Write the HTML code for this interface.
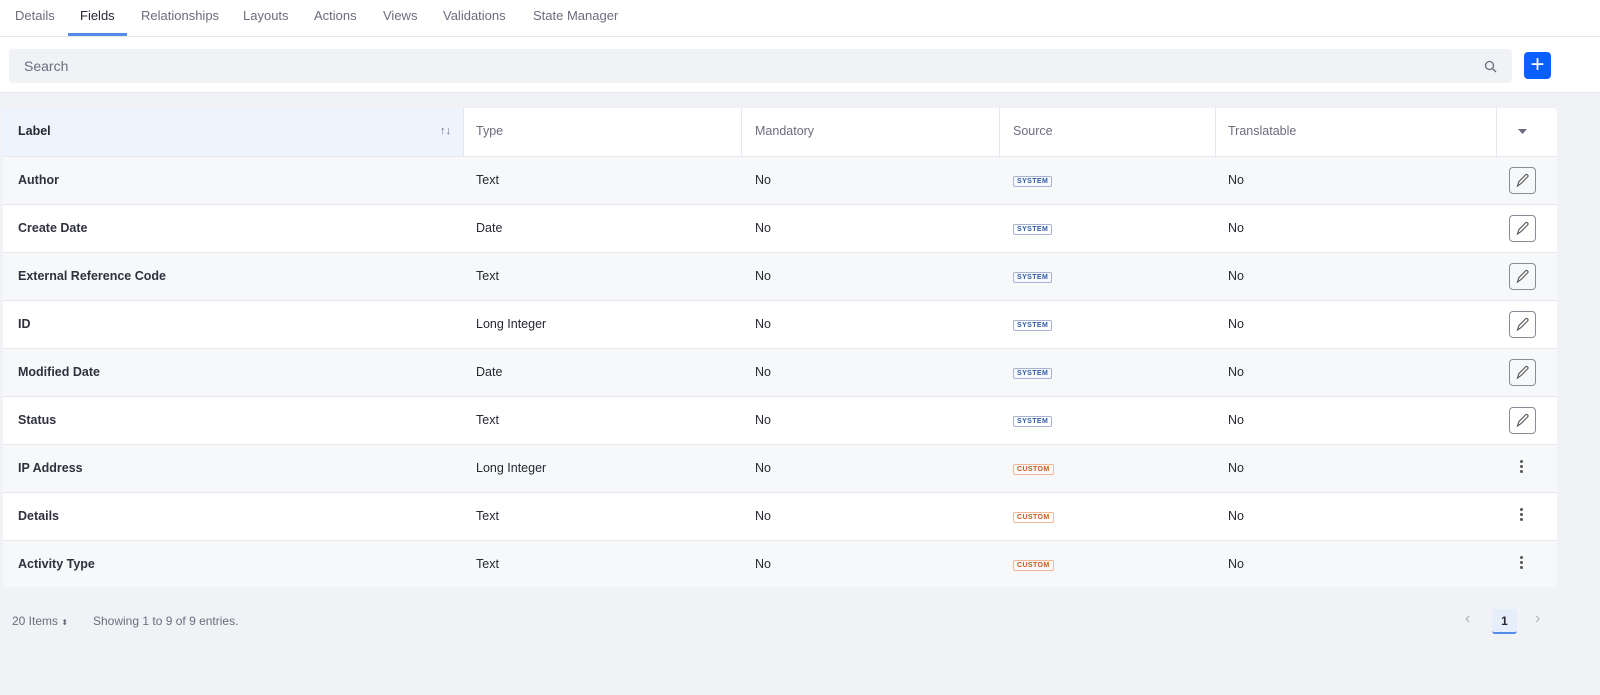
<!DOCTYPE html>
<html><head><style>
*{box-sizing:border-box;margin:0;padding:0}
body{width:1600px;height:695px;background:#f1f2f5;font-family:"Liberation Sans",sans-serif;font-size:12.5px;color:#272833;position:relative;overflow:hidden}
.top{position:absolute;left:0;top:0;width:1600px;height:93px;background:#fff;border-bottom:1px solid #e7e7ed}
.tabs{height:37px;border-bottom:1px solid #e7e7ed;position:relative}
.tab{position:absolute;top:8px;font-size:13px;color:#6b6c7e}
.tab.act{color:#272833}
.ul{position:absolute;left:68px;top:33px;width:59px;height:3px;background:#528bea}
.search{position:absolute;left:9px;top:49px;width:1503px;height:34px;background:#f1f2f5;border-radius:4px}
.search span{position:absolute;left:15px;top:9px;font-size:14px;color:#6b6c7e}
.plus{position:absolute;left:1524px;top:52px;width:27px;height:27px;background:#0b5fff;border-radius:4px;color:#fff;font-size:24px;line-height:25px;text-align:center}
.card{position:absolute;left:3px;top:108px;width:1554px;height:479px;background:#fff;border-radius:4px;overflow:hidden}
.row{position:absolute;left:0;width:1554px;height:48px;border-top:1px solid #e7e7ed}
.row.g{background:#f7f8f9}
.c{position:absolute;top:16px}
.h .c{color:#6b6c7e}
.vl{position:absolute;top:0;width:1px;height:48px;background:#e7e7ed}
.lbl{font-weight:bold;color:#30313f}
.tag{position:absolute;top:19px;left:1010px;font-size:7px;font-weight:bold;padding:1px 3px;border:1px solid #a7b3cf;color:#2e5aac;border-radius:2px;letter-spacing:.4px}
.tag.cu{border-color:#eeb896;color:#d0581d}
.ed{position:absolute;left:1506px;top:10px;width:27px;height:27px;border:1px solid #8a8b96;border-radius:4px}
.dots{position:absolute;left:1517px;top:15px;width:4px}
.dots i{display:block;width:3px;height:3px;border-radius:50%;background:#555;margin-bottom:2px}
.foot{position:absolute;top:614px;font-size:12px;color:#6b6c7e}
</style></head><body>
<div class="top">
<div class="tabs">
<span class="tab" style="left:15px">Details</span>
<span class="tab act" style="left:80px">Fields</span>
<span class="tab" style="left:141px">Relationships</span>
<span class="tab" style="left:243px">Layouts</span>
<span class="tab" style="left:314px">Actions</span>
<span class="tab" style="left:383px">Views</span>
<span class="tab" style="left:443px">Validations</span>
<span class="tab" style="left:533px">State Manager</span>
<div class="ul"></div>
</div>
<div class="search"><span>Search</span>
<svg style="position:absolute;left:1475px;top:11px" width="13" height="13" viewBox="0 0 13 13"><circle cx="5.5" cy="5.5" r="4" fill="none" stroke="#6b6c7e" stroke-width="1.3"/><line x1="8.5" y1="8.5" x2="12" y2="12" stroke="#6b6c7e" stroke-width="1.3"/></svg></div>
<div class="plus">+</div>
</div>
<div class="card">
<div class="row h" style="top:0;border-top:none">
<div style="position:absolute;left:0;top:0;width:460px;height:48px;background:#eef4fd"></div>
<span class="c lbl" style="left:15px;font-weight:bold;color:#272833">Label</span>
<span class="c" style="left:437px;font-size:11px;top:17px">↑↓</span>
<div class="vl" style="left:460px"></div><span class="c" style="left:473px">Type</span>
<div class="vl" style="left:738px"></div><span class="c" style="left:752px">Mandatory</span>
<div class="vl" style="left:996px"></div><span class="c" style="left:1010px">Source</span>
<div class="vl" style="left:1212px"></div><span class="c" style="left:1225px">Translatable</span>
<div class="vl" style="left:1493px"></div>
<svg style="position:absolute;left:1515px;top:21px" width="9" height="6"><path d="M0 0H9L4.5 5Z" fill="#6b6c7e"/></svg>
</div>
<div class="row g" style="top:48px"><span class="c lbl" style="left:15px">Author</span><span class="c" style="left:473px">Text</span><span class="c" style="left:752px">No</span><span class="tag">SYSTEM</span><span class="c" style="left:1225px">No</span><div class="ed"><svg width="25" height="25" viewBox="0 0 25 25"><path d="M7.5 18l1.3-4.3 6.8-6.8a1.4 1.4 0 0 1 2 2l-6.8 6.8z" fill="none" stroke="#555" stroke-width="1.1"/></svg></div></div>
<div class="row" style="top:96px"><span class="c lbl" style="left:15px">Create Date</span><span class="c" style="left:473px">Date</span><span class="c" style="left:752px">No</span><span class="tag">SYSTEM</span><span class="c" style="left:1225px">No</span><div class="ed"><svg width="25" height="25" viewBox="0 0 25 25"><path d="M7.5 18l1.3-4.3 6.8-6.8a1.4 1.4 0 0 1 2 2l-6.8 6.8z" fill="none" stroke="#555" stroke-width="1.1"/></svg></div></div>
<div class="row g" style="top:144px"><span class="c lbl" style="left:15px">External Reference Code</span><span class="c" style="left:473px">Text</span><span class="c" style="left:752px">No</span><span class="tag">SYSTEM</span><span class="c" style="left:1225px">No</span><div class="ed"><svg width="25" height="25" viewBox="0 0 25 25"><path d="M7.5 18l1.3-4.3 6.8-6.8a1.4 1.4 0 0 1 2 2l-6.8 6.8z" fill="none" stroke="#555" stroke-width="1.1"/></svg></div></div>
<div class="row" style="top:192px"><span class="c lbl" style="left:15px">ID</span><span class="c" style="left:473px">Long Integer</span><span class="c" style="left:752px">No</span><span class="tag">SYSTEM</span><span class="c" style="left:1225px">No</span><div class="ed"><svg width="25" height="25" viewBox="0 0 25 25"><path d="M7.5 18l1.3-4.3 6.8-6.8a1.4 1.4 0 0 1 2 2l-6.8 6.8z" fill="none" stroke="#555" stroke-width="1.1"/></svg></div></div>
<div class="row g" style="top:240px"><span class="c lbl" style="left:15px">Modified Date</span><span class="c" style="left:473px">Date</span><span class="c" style="left:752px">No</span><span class="tag">SYSTEM</span><span class="c" style="left:1225px">No</span><div class="ed"><svg width="25" height="25" viewBox="0 0 25 25"><path d="M7.5 18l1.3-4.3 6.8-6.8a1.4 1.4 0 0 1 2 2l-6.8 6.8z" fill="none" stroke="#555" stroke-width="1.1"/></svg></div></div>
<div class="row" style="top:288px"><span class="c lbl" style="left:15px">Status</span><span class="c" style="left:473px">Text</span><span class="c" style="left:752px">No</span><span class="tag">SYSTEM</span><span class="c" style="left:1225px">No</span><div class="ed"><svg width="25" height="25" viewBox="0 0 25 25"><path d="M7.5 18l1.3-4.3 6.8-6.8a1.4 1.4 0 0 1 2 2l-6.8 6.8z" fill="none" stroke="#555" stroke-width="1.1"/></svg></div></div>
<div class="row g" style="top:336px"><span class="c lbl" style="left:15px">IP Address</span><span class="c" style="left:473px">Long Integer</span><span class="c" style="left:752px">No</span><span class="tag cu">CUSTOM</span><span class="c" style="left:1225px">No</span><div class="dots"><i></i><i></i><i></i></div></div>
<div class="row" style="top:384px"><span class="c lbl" style="left:15px">Details</span><span class="c" style="left:473px">Text</span><span class="c" style="left:752px">No</span><span class="tag cu">CUSTOM</span><span class="c" style="left:1225px">No</span><div class="dots"><i></i><i></i><i></i></div></div>
<div class="row g" style="top:432px"><span class="c lbl" style="left:15px">Activity Type</span><span class="c" style="left:473px">Text</span><span class="c" style="left:752px">No</span><span class="tag cu">CUSTOM</span><span class="c" style="left:1225px">No</span><div class="dots"><i></i><i></i><i></i></div></div>
</div>
<span class="foot" style="left:12px">20 Items <span style="font-size:8px">⬍</span></span>
<span class="foot" style="left:93px">Showing 1 to 9 of 9 entries.</span>
<span class="foot" style="left:1465px;font-size:16px;top:610px;color:#b0b1bb">‹</span>
<div style="position:absolute;left:1492px;top:609px;width:25px;height:25px;background:#e6eefb;border-bottom:2px solid #528bea;border-radius:3px;text-align:center;line-height:24px;font-weight:bold;font-size:12px">1</div>
<span class="foot" style="left:1535px;font-size:16px;top:610px;color:#b0b1bb">›</span>
</body></html>
